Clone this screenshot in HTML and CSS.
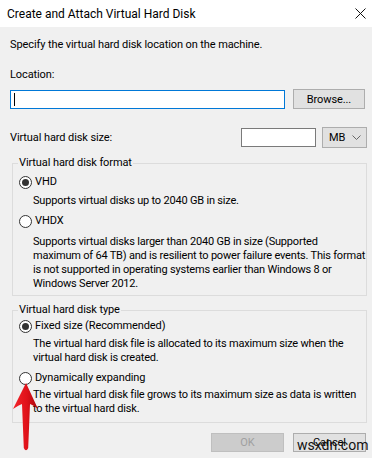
FILE: index.html
```html
<!DOCTYPE html>
<html lang="en">
<head>
    <meta charset="UTF-8">
    <meta name="viewport" content="width=device-width, initial-scale=1.0">
    <title>Create and Attach Virtual Hard Disk</title>
    <link rel="stylesheet" href="styles.css">
</head>
<body>
    <div class="dialog">
        <div class="titlebar">
            <span>Create and Attach Virtual Hard Disk</span>
            <svg class="close" width="11" height="11" viewBox="0 0 11 11">
                <path d="M0.5 0.5 L10.5 10.5 M10.5 0.5 L0.5 10.5" stroke="#111" stroke-width="1" fill="none"/>
            </svg>
        </div>

        <div class="content">
            <p class="intro">Specify the virtual hard disk location on the machine.</p>
            <div class="label">Location:</div>
            <div class="row loc-row">
                <div class="input loc focused"><span class="caret"></span></div>
                <button class="btn browse">Browse...</button>
            </div>

            <div class="row size-row">
                <span class="size-label">Virtual hard disk size:</span>
                <div class="input size"></div>
                <div class="select">
                    <span>MB</span>
                    <svg width="9" height="5" viewBox="0 0 9 5">
                        <path d="M0.5 0.5 L4.5 4.5 L8.5 0.5" stroke="#666" stroke-width="1" fill="none"/>
                    </svg>
                </div>
            </div>

            <fieldset class="group format">
                <legend>Virtual hard disk format</legend>
                <div class="opt first"><span class="radio checked"></span>VHD</div>
                <p class="desc">Supports virtual disks up to 2040 GB in size.</p>
                <div class="opt"><span class="radio"></span>VHDX</div>
                <p class="desc long">Supports virtual disks larger than 2040 GB in size (Supported<br>maximum of 64 TB) and is resilient to power failure events. This format<br>is not supported in operating systems earlier than Windows 8 or<br>Windows Server 2012.</p>
            </fieldset>

            <fieldset class="group type">
                <legend>Virtual hard disk type</legend>
                <div class="opt first"><span class="radio checked"></span>Fixed size (Recommended)</div>
                <p class="desc">The virtual hard disk file is allocated to its maximum size when the<br>virtual hard disk is created.</p>
                <div class="opt"><span class="radio"></span>Dynamically expanding</div>
                <p class="desc">The virtual hard disk file grows to its maximum size as data is written<br>to the virtual hard disk.</p>
            </fieldset>

            <div class="actions">
                <button class="btn ok" disabled>OK</button>
                <button class="btn">Cancel</button>
            </div>
        </div>

        <!-- annotation arrow -->
        <svg class="arrow" width="32" height="74" viewBox="0 0 32 74">
            <defs>
                <linearGradient id="red" x1="0" y1="0" x2="1" y2="0">
                    <stop offset="0" stop-color="#f3252b"/>
                    <stop offset="0.55" stop-color="#e0121a"/>
                    <stop offset="1" stop-color="#a9060c"/>
                </linearGradient>
            </defs>
            <path d="M16 3 L28 29 Q23 25 20 24 L18.2 68 Q16 72.5 13.8 68 L12 24 Q9 25 3 29 Z" fill="url(#red)"/>
        </svg>

        <span class="watermark">wsxdn.com</span>
    </div>
</body>
</html>
```

FILE: styles.css
```css
body {
    margin: 0;
    font-family: Roboto, "Liberation Sans", Arial, sans-serif;
    font-size: 11px;
    line-height: 14px;
    letter-spacing: -0.1px;
    color: #000;
    background-color: #f0f0f0;
}
.dialog {
    position: relative;
    width: 372px;
    height: 458px;
    overflow: hidden;
}
.titlebar {
    height: 27px;
    background-color: #fff;
    display: flex;
    align-items: center;
    justify-content: space-between;
    padding: 0 6px 0 7px;
    font-size: 12px;
    letter-spacing: 0;
}
.content {
    padding: 11px 5px 0 10px;
}
.intro, .desc {
    margin: 0;
}
.label {
    margin-top: 16px;
}
.row {
    display: flex;
    align-items: center;
}
.loc-row {
    margin-top: 7px;
}
.input {
    box-sizing: border-box;
    background-color: #fff;
    border: 1px solid #7a7a7a;
}
.input.focused {
    border-color: #0078d7;
}
.loc {
    width: 275px;
    height: 19px;
    padding: 2px 3px;
}
.caret {
    display: block;
    width: 1px;
    height: 13px;
    background-color: #000;
}
.btn {
    box-sizing: border-box;
    font-family: inherit;
    font-size: 11px;
    letter-spacing: inherit;
    color: #000;
    background-color: #e1e1e1;
    border: 1px solid #adadad;
    height: 20px;
    padding: 0;
}
.browse {
    width: 72px;
    margin-left: 8px;
}
.size-row {
    margin-top: 18px;
}
.size-label {
    flex: 1;
}
.size {
    width: 75px;
    height: 19px;
}
.select {
    box-sizing: border-box;
    width: 45px;
    height: 21px;
    margin-left: 6px;
    background-color: #e1e1e1;
    border: 1px solid #adadad;
    display: flex;
    align-items: center;
    justify-content: space-between;
    padding: 0 5px 0 6px;
}
.group {
    margin: 8px 0 0 2px;
    padding: 0 0 4px 0;
    border: 1px solid #dcdcdc;
}
.group legend {
    margin-left: 5px;
    padding: 0 1px;
}
.type {
    margin-top: 7px;
    padding-bottom: 6px;
}
.opt {
    display: flex;
    align-items: center;
    margin: 6px 0 0 6px;
}
.format .opt.first {
    margin-top: 5px;
}
.type .opt.first {
    margin-top: 2px;
}
.type .desc {
    margin-top: 4px;
}
.type .desc + .opt {
    margin-top: 6px;
}
.type .desc:last-child {
    margin-top: 3px;
}
.radio {
    box-sizing: border-box;
    width: 13px;
    height: 13px;
    border: 1px solid #333;
    border-radius: 50%;
    background-color: #fff;
    margin-right: 3px;
    position: relative;
}
.radio.checked::after {
    content: "";
    position: absolute;
    left: 2px;
    top: 2px;
    width: 7px;
    height: 7px;
    border-radius: 50%;
    background-color: #333;
}
.desc {
    margin: 5px 0 0 20px;
    white-space: nowrap;
    letter-spacing: -0.2px;
}
.desc.long {
    margin-top: 7px;
}
.actions {
    display: flex;
    justify-content: flex-end;
    gap: 9px;
    margin: 10px 1px 0 0;
}
.actions .btn {
    width: 73px;
    height: 19px;
}
.ok {
    background-color: #cccccc;
    border-color: #bfbfbf;
    color: #a0a0a0;
}
.arrow {
    position: absolute;
    left: 10px;
    top: 380px;
}
.watermark {
    position: absolute;
    left: 297px;
    top: 437px;
    font-size: 14px;
    line-height: 16px;
    letter-spacing: 0;
    color: #111;
}
```
